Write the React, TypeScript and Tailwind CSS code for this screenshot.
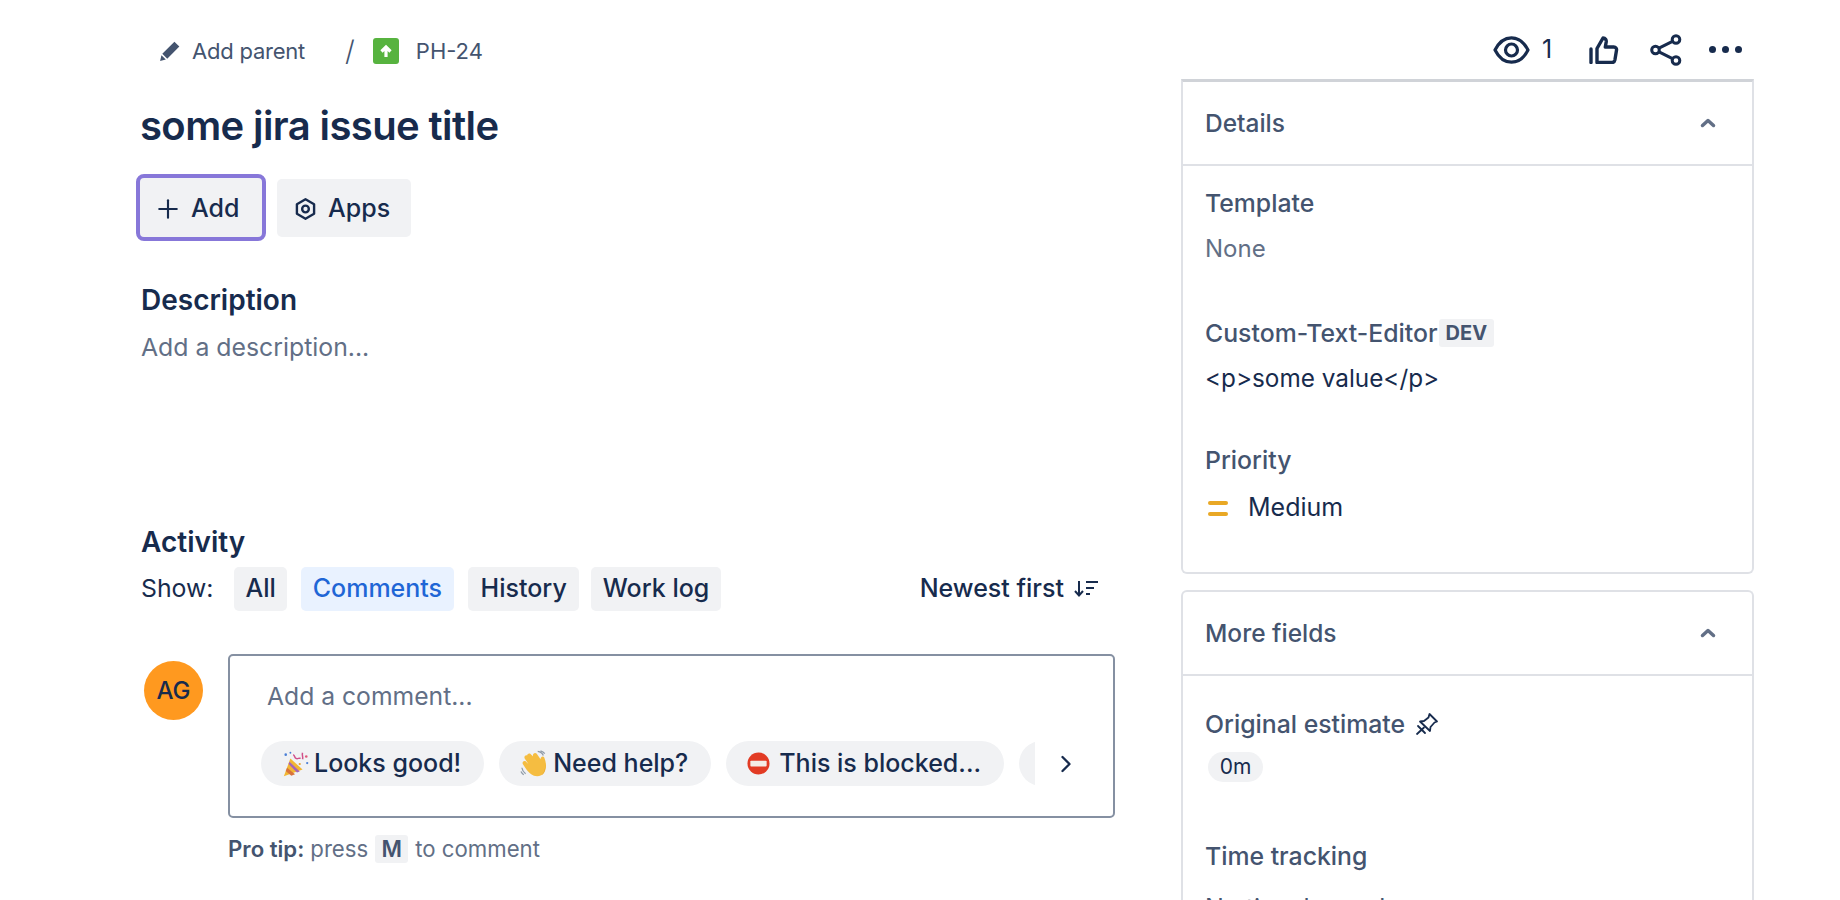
import { ChevronRight, Plus } from 'lucide-react'

const filterBtn = 'flex h-[44px] items-center rounded-[5px] bg-[#f1f2f4] px-[11px] text-[25px] font-medium text-[#172b4d]'
const chip = 'flex h-[45px] shrink-0 items-center rounded-full bg-[#f1f2f4] pl-[21px] pr-[23px] text-[25px] font-medium text-[#172b4d]'
const fieldLabel = 'text-[24.800px] leading-[30px] font-medium text-[#44546f]'

function PartyPopper() {
  return (
    <svg viewBox="0 0 30 30" className="mr-[4px] h-[28px] w-[28px] shrink-0">
      <path d="M2 28 9 9l13 12z" fill="#f2b632" />
      <path d="M5.5 19 14 26l-4 1.5-6-5z" fill="#d8733c" />
      <path d="M8 12.5 19 23l-3 1L7 15z" fill="#a564b8" />
      <path d="M12 5c2 1 1 3 3 4s3-1 5 0" fill="none" stroke="#d0508a" strokeWidth="1.6" />
      <path d="M22 3c-1 3 1 4 0 7" fill="none" stroke="#d0508a" strokeWidth="1.6" />
      <circle cx="4" cy="5" r="1.4" fill="#4a7fd6" />
      <circle cx="9" cy="3" r="1" fill="#4a7fd6" />
      <circle cx="26" cy="7" r="1.4" fill="#e05a7a" />
      <circle cx="27" cy="14" r="1.2" fill="#4a7fd6" />
      <circle cx="19" cy="15" r="1.2" fill="#e8a02c" />
    </svg>
  )
}

function WavingHand() {
  return (
    <svg viewBox="0 0 30 30" className="mr-[5px] h-[28px] w-[28px] shrink-0">
      <path d="M8 7c-1-2 1-4 3-3l3 3c-1-3 2-5 4-3l4 6c0-3 3-4 4-2 2 5 3 11 0 16-3 5-10 5-14 2-3-2-6-6-9-11-1-2 1-4 3-3l3 3-4-6c-1-2 1-4 3-3z" fill="#f5bd41" />
      <path d="M23 27c4-2 5-8 3-15l-1-3c2 5 3 11 0 16z" fill="#dd9526" />
      <path d="M19 1.5c3 .3 5 2 6 4.500M22 1c2 .5 3.500 1.500 4.500 3" fill="none" stroke="#8f9ba8" strokeWidth="1.4" />
      <path d="M2 19c.5 3 2 5 4 6.500M1 23c.8 1.500 1.500 2.500 3 3.500" fill="none" stroke="#8f9ba8" strokeWidth="1.4" />
    </svg>
  )
}

function NoEntry() {
  return (
    <svg viewBox="0 0 24 24" className="mr-[9px] h-[23px] w-[23px] shrink-0">
      <circle cx="12" cy="12" r="11.500" fill="#e23b24" />
      <rect x="3.500" y="9" width="17" height="6" rx="1" fill="#f4ece6" />
    </svg>
  )
}

function TopActions() {
  return (
    <div className="flex h-[79px] items-center pl-[312px] pt-[20px] text-[#172b4d]">
      <svg viewBox="0 0 37 28" className="h-[28px] w-[37px]" fill="none" stroke="currentColor" strokeWidth="3.200">
        <path d="M2 14C6 6 11.500 1.800 18.500 1.800S31 6 35 14c-4 8-9.500 12.200-16.500 12.200S6 22 2 14z" strokeLinejoin="round" />
        <circle cx="18.500" cy="14" r="6" />
      </svg>
      <span className="ml-[12px] w-[47px] text-[25px]">1</span>
      <svg viewBox="0 0 30 28" className="mr-[31px] h-[28px] w-[30px]" fill="none" stroke="currentColor" strokeWidth="3.400" strokeLinecap="round" strokeLinejoin="round">
        <path d="M2 13v13.500" />
        <path d="M8 12.500 14 2c2.500 0 3.500 2 3.200 4l-.9 5h8.500c2 0 3 1.500 2.700 3.200l-1.600 9.800c-.3 1.500-1.400 2.500-3 2.500H8z" />
      </svg>
      <svg viewBox="0 0 32 32" className="mr-[27px] h-[32px] w-[32px]" fill="none" stroke="currentColor" strokeWidth="3">
        <circle cx="5.500" cy="16" r="3.800" />
        <circle cx="26" cy="5.500" r="3.800" />
        <circle cx="26" cy="26.500" r="3.800" />
        <path d="M9 14.200 22.500 7.300M9 17.800l13.500 6.900" />
      </svg>
      <div className="flex gap-[6px]">
        <span className="h-[7px] w-[7px] rounded-full bg-[#172b4d]" />
        <span className="h-[7px] w-[7px] rounded-full bg-[#172b4d]" />
        <span className="h-[7px] w-[7px] rounded-full bg-[#172b4d]" />
      </div>
    </div>
  )
}

function CardHeader({ title }: { title: string }) {
  return (
    <div className="flex h-[84px] items-center justify-between border-b-2 border-[#dfe1e6] pl-[22px] pr-[36px]">
      <span className="text-[24.500px] font-medium text-[#44546f]">{title}</span>
      <svg viewBox="0 0 16 10" className="h-[10px] w-[16px]" fill="none" stroke="#626f86" strokeWidth="3.500" strokeLinecap="round" strokeLinejoin="round">
        <path d="M2.500 7.500 8 2.500l5.500 5" />
      </svg>
    </div>
  )
}

export default function App() {
  return (
    <div className="flex h-screen overflow-hidden bg-white font-[Inter,sans-serif]">
      <main className="ml-[141px] w-[976px] shrink-0">
        <div className="flex h-[102px] items-center pl-[18px] text-[22px] text-[#44546f]">
          <svg viewBox="0 0 20 20" className="h-[22px] w-[22px]" fill="#44546f">
            <path d="M14 1.500 18.500 6 7.500 17l-4.500-4.500zM2.200 13.800l4 4-5.200 1.200z" />
          </svg>
          <span className="ml-[11px] tracking-[-0.01em]">Add parent</span>
          <span className="ml-[40px] text-[28px] font-light">/</span>
          <span className="ml-[18px] flex h-[26px] w-[26px] items-center justify-center rounded-[3px] bg-[#57b33f]">
            <svg viewBox="0 0 16 16" className="h-[16px] w-[16px]" fill="none" stroke="#fff" strokeWidth="3.200">
              <path d="M8 14V4M3.500 8.500 8 4l4.500 4.500" />
            </svg>
          </span>
          <span className="ml-[17px]">PH-24</span>
        </div>

        <h1 className="-ml-[1px] flex h-[46px] items-center pt-[2px] text-[40px] font-semibold tracking-[-0.015em] text-[#172b4d]">some jira issue title</h1>

        <div className="-ml-[5px] mt-[26px] flex items-center">
          <button className="flex h-[67px] w-[130px] items-center rounded-[8px] border-[4px] border-[#8777d9] bg-[#f1f2f4] pl-[13px] pt-[2px] text-[25px] font-medium text-[#172b4d]">
            <Plus className="mr-[8px] h-[30px] w-[30px]" strokeWidth={1.7} />
            Add
          </button>
          <button className="ml-[11px] flex h-[58px] items-center rounded-[5px] bg-[#f1f2f4] pl-[18px] pr-[21px] pt-[2px] text-[25px] font-medium text-[#172b4d]">
            <svg viewBox="0 0 22 24" className="mr-[12px] h-[24px] w-[21px]" fill="none" stroke="#172b4d" strokeWidth="2.500">
              <path d="M11 1.800 20 7v10l-9 5.200L2 17V7z" strokeLinejoin="round" />
              <circle cx="11" cy="12" r="3.500" />
            </svg>
            Apps
          </button>
        </div>

        <h2 className="mt-[42px] text-[28px] leading-[34px] font-semibold text-[#172b4d]">Description</h2>
        <p className="mt-[13px] text-[24.800px] leading-[34px] text-[#626f86]">Add a description...</p>

        <h2 className="mt-[161px] text-[28px] leading-[34px] font-semibold text-[#172b4d]">Activity</h2>
        <div className="mt-[8px] flex h-[44px] w-[958px] items-center text-[24.800px] text-[#172b4d]">
          <span className="mr-[21px]">Show:</span>
          <div className="flex">
            <button className={filterBtn}>All</button>
            <button className="ml-[14px] flex h-[44px] items-center rounded-[5px] bg-[#e9f2ff] px-[12px] text-[25px] font-medium text-[#1f66d6]">Comments</button>
            <button className="ml-[14px] flex h-[44px] items-center rounded-[5px] bg-[#f1f2f4] px-[12.500px] text-[25px] font-medium text-[#172b4d]">History</button>
            <button className="ml-[12px] flex h-[44px] items-center rounded-[5px] bg-[#f1f2f4] px-[11.500px] text-[25px] font-medium text-[#172b4d]">Work log</button>
          </div>
          <div className="ml-auto flex items-center text-[25px] font-medium">
            Newest first
            <svg viewBox="0 0 26 20" className="ml-[9px] h-[20px] w-[26px]" fill="none" stroke="#172b4d" strokeWidth="2">
              <path d="M6 2v14M2 12l4 4.500 4-4.500" />
              <path d="M13 3h12M13 9h8M13 15h4" />
            </svg>
          </div>
        </div>

        <div className="mt-[43px] flex items-start">
          <div className="ml-[3px] mt-[7px] flex h-[59px] w-[59px] shrink-0 items-center justify-center rounded-full bg-[#ff991f] text-[24px] font-medium text-[#172b4d]">AG</div>
          <div className="ml-[25px] flex-1">
            <div className="h-[164px] w-[887px] rounded-[5px] border-2 border-[#8590a2] pl-[37px] pt-[23px]">
              <p className="text-[24.700px] leading-[34px] text-[#626f86]">Add a comment...</p>
              <div className="mt-[28px] -ml-[6px] flex items-center">
                <div className="flex w-[774px] gap-[15px] overflow-hidden">
                  <div className={chip}><PartyPopper />Looks good!</div>
                  <div className={chip}><WavingHand />Need help?</div>
                  <div className={chip}><NoEntry />This is blocked...</div>
                  <div className="h-[45px] w-[60px] shrink-0 rounded-full bg-[#f1f2f4]" />
                </div>
                <ChevronRight className="ml-[17px] h-[28px] w-[28px] text-[#172b4d]" strokeWidth={2} />
              </div>
            </div>
            <div className="mt-[14px] flex items-center text-[22.200px] text-[#626f86]">
              <span className="font-semibold text-[#44546f]">Pro tip:</span>
              <span className="ml-[6px]">press</span>
              <span className="mx-[7px] flex h-[28px] w-[33px] items-center justify-center rounded-[3px] bg-[#f1f2f4] font-semibold text-[#44546f]">M</span>
              <span>to comment</span>
            </div>
          </div>
        </div>
      </main>

      <aside className="ml-[64px] w-[573px] shrink-0">
        <TopActions />
        <section className="h-[495px] rounded-b-[6px] border-2 border-t-[3px] border-[#dfe1e6] border-t-[#d0d3d8]">
          <CardHeader title="Details" />
          <div className="pl-[22px]">
            <div className={`${fieldLabel} mt-[22px]`}>Template</div>
            <div className="mt-[16px] text-[24px] leading-[30px] text-[#626f86]">None</div>
            <div className="mt-[54px] flex h-[30px] items-center">
              <span className={fieldLabel}>Custom-Text-Editor</span>
              <span className="ml-[1px] flex h-[28px] items-center rounded-[3px] bg-[#f1f2f4] px-[7px] text-[20px] font-bold text-[#44546f]">DEV</span>
            </div>
            <div className="mt-[15px] text-[24.300px] leading-[30px] text-[#172b4d]">&lt;p&gt;some value&lt;/p&gt;</div>
            <div className={`${fieldLabel} mt-[52px]`}>Priority</div>
            <div className="mt-[18px] flex h-[30px] items-center text-[25px] text-[#172b4d]">
              <span className="ml-[3px] flex w-[20px] flex-col gap-[7px]">
                <span className="h-[4px] rounded-full bg-[#e9a825]" />
                <span className="h-[4px] rounded-full bg-[#e9a825]" />
              </span>
              <span className="ml-[20px]">Medium</span>
            </div>
          </div>
        </section>

        <section className="mt-[16px] rounded-t-[6px] border-2 border-b-0 border-[#dfe1e6]">
          <CardHeader title="More fields" />
          <div className="pl-[22px] pb-[40px]">
            <div className="mt-[33px] flex h-[30px] items-center">
              <span className={fieldLabel}>Original estimate</span>
              <svg viewBox="0 0 24 24" className="ml-[10px] h-[24px] w-[24px]" fill="none" stroke="#172b4d" strokeWidth="1.800" strokeLinejoin="round" strokeLinecap="round">
                <path d="M14.500 2 22 9.500l-2.500 1-4 4.500-.5 4-10-9.500 4-.5 4.500-3.500z" />
                <path d="m2 22 7-6.500M3 14l7 7" />
              </svg>
            </div>
            <div className="ml-[3px] mt-[13px] flex h-[30px] w-[55px] items-center justify-center rounded-full bg-[#f1f2f4] text-[21px] text-[#172b4d]">0m</div>
            <div className={`${fieldLabel} mt-[59px]`}>Time tracking</div>
            <div className="mt-[22px] text-[25px] leading-[30px] text-[#44546f]">No time logged</div>
          </div>
        </section>
      </aside>
    </div>
  )
}
